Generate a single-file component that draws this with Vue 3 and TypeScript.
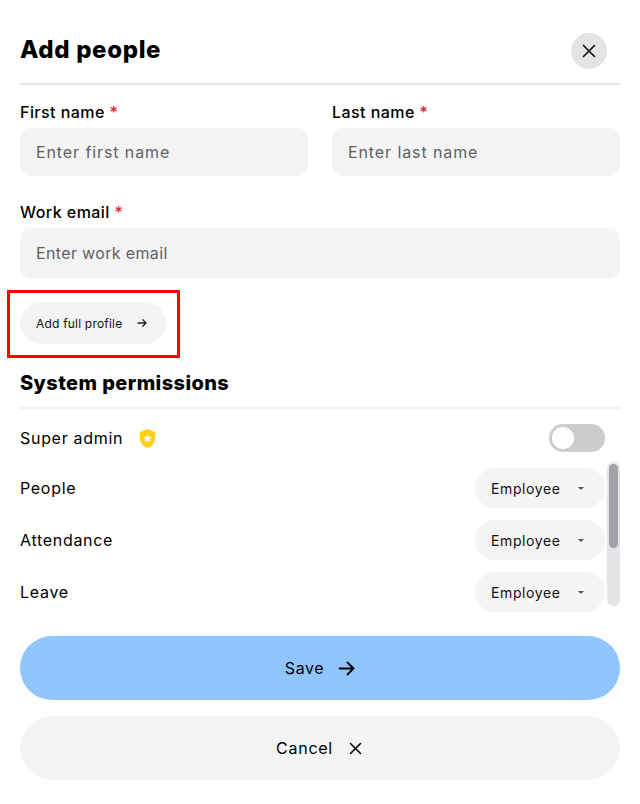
<script setup lang="ts">
const nameFields = [
  { label: 'First name', placeholder: 'Enter first name' },
  { label: 'Last name', placeholder: 'Enter last name' },
]
const modules = ['People', 'Attendance', 'Leave']
</script>

<template>
  <div class="panel">
    <header class="head">
      <h1>Add people</h1>
      <button class="close" type="button" aria-label="Close">
        <svg width="14" height="14" viewBox="0 0 14 14" fill="none" stroke="#111" stroke-width="1.7" stroke-linecap="round">
          <path d="M1.5 1.5l11 11M12.5 1.5l-11 11" />
        </svg>
      </button>
    </header>

    <div class="name-grid">
      <label v-for="f in nameFields" :key="f.label" class="field">
        <span class="label">{{ f.label }} <em>*</em></span>
        <input class="input" type="text" :placeholder="f.placeholder" />
      </label>
    </div>

    <label class="field email">
      <span class="label">Work email <em>*</em></span>
      <input class="input tall" type="text" placeholder="Enter work email" />
    </label>

    <div class="profile-wrap">
      <button class="profile" type="button">
        Add full profile
        <svg width="10" height="10" viewBox="0 0 10 10" fill="none" stroke="#222" stroke-width="1.3" stroke-linecap="round" stroke-linejoin="round">
          <path d="M1 5h8M5.8 1.8L9 5 5.8 8.2" />
        </svg>
      </button>
      <span class="highlight"></span>
    </div>

    <h2>System permissions</h2>

    <div class="super">
      <span class="row-name">Super admin</span>
      <svg class="shield" width="17" height="21" viewBox="0 0 18 21">
        <path d="M9 .5l8 3v7c0 4.8-3.4 8.300-8 10-4.600-1.700-8-5.200-8-10v-7z" fill="#fdd017" />
        <path d="M9 6l1.300 2.900 3.100.3-2.300 2.100.7 3.100L9 12.800l-2.800 1.600.7-3.100-2.300-2.100 3.100-.3z" fill="#fff" />
      </svg>
      <span class="toggle"><span class="knob"></span></span>
    </div>

    <div class="perm-list">
      <div v-for="m in modules" :key="m" class="perm-row">
        <span class="row-name">{{ m }}</span>
        <button class="select" type="button">
          Employee
          <svg width="6" height="3" viewBox="0 0 6 3"><path d="M0 0h6L3 3z" fill="#555" /></svg>
        </button>
      </div>
      <div class="scrollbar"><div class="thumb"></div></div>
    </div>

    <div class="actions">
      <button class="action save" type="button">
        Save
        <svg width="17" height="15" viewBox="0 0 17 15" fill="none" stroke="#000" stroke-width="1.800" stroke-linecap="round" stroke-linejoin="round">
          <path d="M1.500 7.500h14M9.500 1.500l6 6-6 6" />
        </svg>
      </button>
      <button class="action cancel" type="button">
        Cancel
        <svg width="13" height="13" viewBox="0 0 13 13" fill="none" stroke="#000" stroke-width="1.600" stroke-linecap="round">
          <path d="M1.500 1.500l10 10M11.500 1.500l-10 10" />
        </svg>
      </button>
    </div>
  </div>
</template>

<style scoped>
.panel {
  width: 640px;
  height: 804px;
  box-sizing: border-box;
  padding: 32px 20px 0;
  background: #fff;
  color: #000;
  font-family: Inter, "Liberation Sans", sans-serif;
  overflow: hidden;
}

.head {
  display: flex;
  align-items: center;
  justify-content: space-between;
  height: 36px;
  padding-right: 13px;
  padding-bottom: 15px;
  border-bottom: 2px solid #e8e8e8;
}

h1 {
  margin: 0;
  font-size: 24px;
  line-height: 36px;
  font-weight: 800;
  letter-spacing: 0.65px;
}

.close {
  width: 36px;
  height: 36px;
  margin-top: 2px;
  display: flex;
  align-items: center;
  justify-content: center;
  border: 0;
  padding: 0;
  border-radius: 50%;
  background: #e4e4e7;
}

.name-grid {
  display: grid;
  grid-template-columns: 288px 288px;
  column-gap: 24px;
  margin-top: 15px;
}

.field {
  display: flex;
  flex-direction: column;
  gap: 4px;
}

.label {
  font-size: 16px;
  line-height: 24px;
  font-weight: 500;
  letter-spacing: 0.45px;
}

.label em {
  font-style: normal;
  color: #e5202e;
}

.input {
  height: 48px;
  box-sizing: border-box;
  border: 0;
  outline: 0;
  padding: 0 16px;
  border-radius: 10px;
  background: #f4f4f4;
  font: 400 16px Inter, "Liberation Sans", sans-serif;
  letter-spacing: 0.9px;
}

.input.tall {
  height: 50px;
  letter-spacing: 0.35px;
}

.input::placeholder {
  color: #5f5f66;
  opacity: 1;
}

.email {
  margin-top: 24px;
}

.profile-wrap {
  position: relative;
  margin-top: 24px;
  height: 42px;
}

.profile {
  height: 42px;
  width: 146px;
  display: flex;
  align-items: center;
  gap: 15px;
  border: 0;
  padding: 0 16px;
  border-radius: 21px;
  background: #f4f4f4;
  color: #111;
  font: 400 12px Inter, "Liberation Sans", sans-serif;
  letter-spacing: 0.2px;
  white-space: nowrap;
}

/* annotation box drawn over the button */
.highlight {
  position: absolute;
  left: -13px;
  top: -12px;
  width: 173px;
  height: 68px;
  box-sizing: border-box;
  border: 3px solid #f00;
  pointer-events: none;
}

h2 {
  margin: 24px 0 0;
  padding-bottom: 9px;
  border-bottom: 2px solid #f0f0f0;
  font-size: 20px;
  line-height: 30px;
  font-weight: 800;
  letter-spacing: 0.4px;
}

.super {
  display: flex;
  align-items: center;
  height: 28px;
  margin-top: 15px;
  padding-right: 15px;
}

.row-name {
  font-size: 16px;
  line-height: 24px;
  letter-spacing: 0.7px;
}

.shield {
  margin-left: 16px;
}

.toggle {
  margin-left: auto;
  width: 56px;
  height: 28px;
  box-sizing: border-box;
  padding: 3px;
  border-radius: 14px;
  background: #cccccc;
}

.knob {
  display: block;
  width: 22px;
  height: 22px;
  border-radius: 50%;
  background: #fff;
}

.perm-list {
  position: relative;
  display: flex;
  flex-direction: column;
  gap: 12px;
  height: 150px;
  box-sizing: border-box;
  margin-top: 10px;
  padding: 6px 15px 0 0;
}

/* custom scrollbar sitting at the right edge of the list */
.scrollbar {
  position: absolute;
  right: 0;
  top: 0;
  width: 13px;
  height: 144px;
  box-sizing: border-box;
  padding: 2px;
  border-radius: 6px;
  background: #e4e4e7;
}

.thumb {
  height: 84px;
  border-radius: 5px;
  background: #a1a1aa;
}

.perm-row {
  display: flex;
  align-items: center;
  justify-content: space-between;
  height: 40px;
}

.select {
  width: 130px;
  height: 40px;
  box-sizing: border-box;
  display: flex;
  align-items: center;
  justify-content: space-between;
  border: 0;
  padding: 0 21px 0 16px;
  border-radius: 20px;
  background: #f4f4f4;
  color: #111;
  font: 400 14px Inter, "Liberation Sans", sans-serif;
  letter-spacing: 0.6px;
}

.actions {
  display: flex;
  flex-direction: column;
  gap: 16px;
  margin-top: 24px;
}

.action {
  height: 64px;
  box-sizing: border-box;
  display: flex;
  align-items: center;
  justify-content: center;
  gap: 14px;
  border: 0;
  border-radius: 32px;
  color: #000;
  font: 400 16px Inter, "Liberation Sans", sans-serif;
  letter-spacing: 0.6px;
}

.save {
  background: #90c5fd;
}

.cancel {
  gap: 16px;
  padding: 0 2px 0 0;
  background: #f4f4f4;
  letter-spacing: 0.75px;
}
</style>
